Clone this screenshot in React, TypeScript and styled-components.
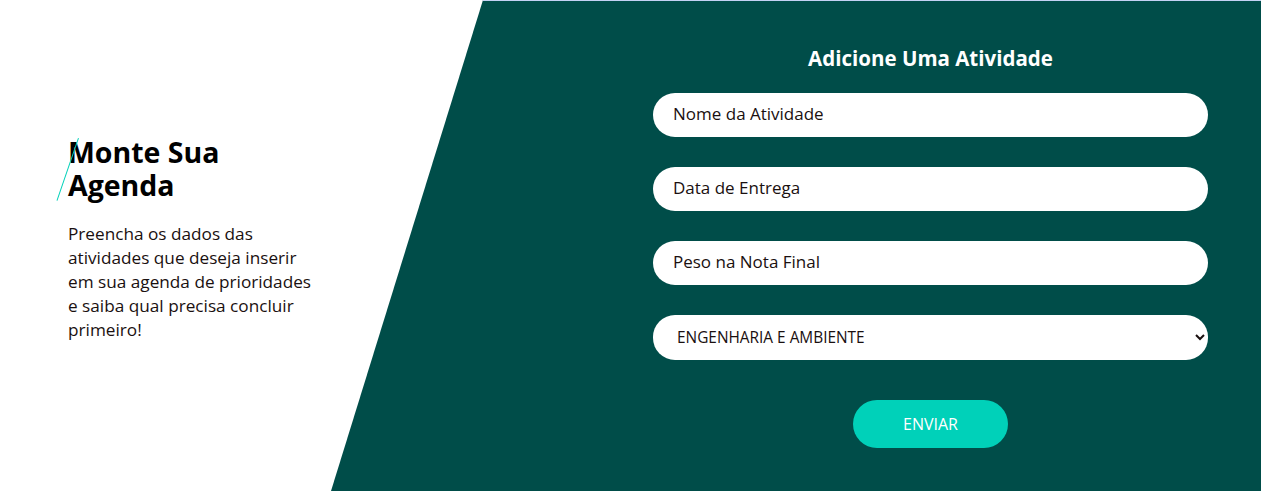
import React from "react";
import styled, { createGlobalStyle } from "styled-components";

const Global = createGlobalStyle`
  html, body { margin: 0; padding: 0; background: #ffffff; }
  body { font-family: "Open Sans", "Liberation Sans", sans-serif; }
  * { box-sizing: border-box; }
`;

const Page = styled.div`
  display: grid;
  grid-template-columns: 331px 1fr;
  width: 1261px;
  height: 491px;
  overflow: hidden;
`;

const Intro = styled.section`
  display: flex;
  flex-direction: column;
  justify-content: flex-start;
  padding: 136px 0 0 68px;
`;

const TitleWrap = styled.div`
  position: relative;
`;

const Slash = styled.span`
  position: absolute;
  left: 10px;
  top: 2px;
  width: 1px;
  height: 66px;
  background: #00d1b9;
  transform: rotate(19deg);
  transform-origin: top left;
`;

const Title = styled.h1`
  margin: 0;
  font-size: 28.5px;
  line-height: 33px;
  font-weight: 700;
  color: #000;
`;

const TitleLine = styled.span`
  display: block;
  height: 33px;
`;

const Text = styled.p`
  margin: 20px 0 0;
  width: 262px;
  font-size: 17.2px;
  line-height: 24px;
  color: #1a1010;
  white-space: nowrap;
`;

const Panel = styled.section`
  background: #004d49;
  border-top: 1px solid #c4d2f4;
  clip-path: polygon(152px 0, 100% 0, 100% 100%, 0 100%);
  display: flex;
  flex-direction: column;
  align-items: center;
  padding: 44px 53px 0 322px;
`;

const Heading = styled.h2`
  margin: 0 0 22px;
  font-size: 20.5px;
  line-height: 26px;
  font-weight: 700;
  color: #ffffff;
`;

const Form = styled.form`
  display: flex;
  flex-direction: column;
  align-items: center;
  gap: 30px;
  width: 555px;
`;

const Field = styled.input`
  width: 100%;
  height: 44px;
  border: none;
  border-radius: 22px;
  padding: 0 20px 3px;
  background: #fff;
  font-family: inherit;
  font-size: 17px;
  color: #1a1010;
  outline: none;
  &::placeholder { color: #1a1010; opacity: 1; }
`;

const Select = styled.select`
  width: 100%;
  height: 45px;
  border: none;
  border-radius: 22px;
  padding: 0 8px 0 20px;
  background: #fff;
  font-family: inherit;
  font-size: 15.4px;
  color: #1a1010;
  outline: none;
`;

const Submit = styled.button`
  margin-top: 10px;
  width: 155px;
  height: 48px;
  border: none;
  border-radius: 24px;
  background: #00d1b9;
  color: #ffffff;
  font-family: inherit;
  font-size: 16px;
  padding-bottom: 2px;
  cursor: pointer;
`;

export default function App() {
  return (
    <>
      <Global />
      <Page>
        <Intro>
          <TitleWrap>
            <Slash />
            <Title>
              <TitleLine>Monte Sua</TitleLine>
              <TitleLine>Agenda</TitleLine>
            </Title>
          </TitleWrap>
          <Text>
            Preencha os dados das
            <br />
            atividades que deseja inserir
            <br />
            em sua agenda de prioridades
            <br />
            e saiba qual precisa concluir
            <br />
            primeiro!
          </Text>
        </Intro>
        <Panel>
          <Heading>Adicione Uma Atividade</Heading>
          <Form onSubmit={(e) => e.preventDefault()}>
            <Field placeholder="Nome da Atividade" />
            <Field placeholder="Data de Entrega" />
            <Field placeholder="Peso na Nota Final" />
            <Select defaultValue="eng">
              <option value="eng">ENGENHARIA E AMBIENTE</option>
            </Select>
            <Submit type="submit">ENVIAR</Submit>
          </Form>
        </Panel>
      </Page>
    </>
  );
}
